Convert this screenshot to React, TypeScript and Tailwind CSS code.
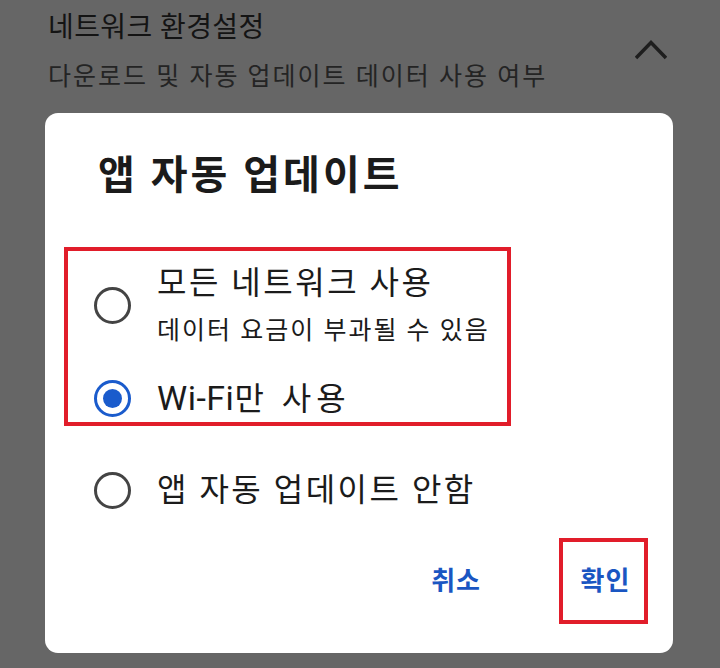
import React from "react";

const font = { fontFamily: '"Roboto", "Noto Sans CJK KR", sans-serif' };

const Radio = ({ checked }: { checked?: boolean }) =>
  checked ? (
    <div className="flex h-[37px] w-[37px] shrink-0 items-center justify-center rounded-full border-[3.5px] border-[#1a5bcc]">
      <div className="h-[19px] w-[19px] rounded-full bg-[#1a5bcc]" />
    </div>
  ) : (
    <div className="h-[37px] w-[37px] shrink-0 rounded-full border-[3.5px] border-[#444444]" />
  );

export default function App() {
  return (
    <div className="h-[668px] w-[720px] overflow-hidden bg-[#666666]" style={font}>
      <div className="flex items-start justify-between pl-[48px] pr-[53px] pt-[10px]">
        <div>
          <div className="text-[28px] leading-[36px] tracking-[0.4px] text-[#141414]">네트워크 환경설정</div>
          <div className="mt-[15px] text-[25px] leading-[32px] tracking-[2px] text-[#242424]">
            다운로드 및 자동 업데이트 데이터 사용 여부
          </div>
        </div>
        <svg width="32" height="20" viewBox="0 0 32 20" className="mt-[30px]">
          <polyline points="1,18 16,2.5 31,18" fill="none" stroke="#1e1e1e" strokeWidth="3.5" />
        </svg>
      </div>

      <div className="ml-[45px] mt-[20px] h-[540px] w-[628px] rounded-[13px] bg-white">
        <div className="pl-[53px] pt-[39px] text-[40px] font-bold leading-[48px] tracking-[3px] text-[#1b1b1b]">
          앱 자동 업데이트
        </div>

        <div className="ml-[19px] mt-[47px] w-[447px] border-4 border-[#e11d2a] pb-[3px] pl-[26px] pt-[12px]">
          <div className="flex items-center gap-[26px]">
            <Radio />
            <div>
              <div className="text-[32px] leading-[40px] tracking-[2.5px] text-[#1b1b1b]">모든 네트워크 사용</div>
              <div className="mt-[12px] text-[25px] leading-[32px] tracking-[2px] text-[#1b1b1b]">
                데이터 요금이 부과될 수 있음
              </div>
            </div>
          </div>
          <div className="mt-[31px] flex items-center gap-[26px]">
            <Radio checked />
            <div className="text-[32px] leading-[40px] text-[#1b1b1b]">
              <span className="text-[34px] tracking-[0.5px]">Wi-Fi</span>
              <span className="tracking-[5px]">만 사용</span>
            </div>
          </div>
        </div>

        <div className="ml-[49px] mt-[44px] flex items-center gap-[26px]">
          <Radio />
          <div className="text-[32px] leading-[40px] tracking-[2.5px] text-[#1b1b1b]">앱 자동 업데이트 안함</div>
        </div>

        <div className="mr-[25px] mt-[28px] flex items-center justify-end">
          <button className="mr-[78px] text-[26px] font-bold leading-[32px] tracking-[1px] text-[#1a56c2]">취소</button>
          <div className="flex h-[86px] w-[89px] items-center justify-center border-4 border-[#e11d2a]">
            <button className="ml-[4px] text-[26px] font-bold leading-[32px] tracking-[1px] text-[#1a56c2]">확인</button>
          </div>
        </div>
      </div>
    </div>
  );
}
